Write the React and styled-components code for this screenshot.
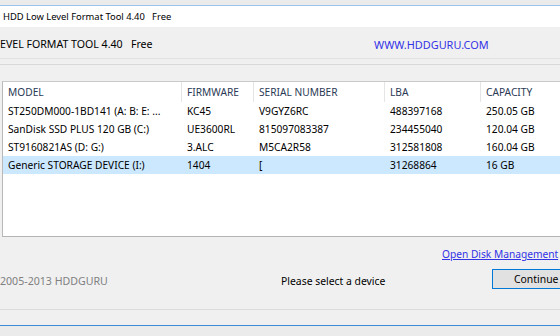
import React from "react"
import styled, { createGlobalStyle } from "styled-components"

const GlobalStyle = createGlobalStyle`
  html, body {
    margin: 0;
    padding: 0;
    background: #ececec;
    font-family: "Noto Sans", "Open Sans", sans-serif;
    font-size: 10.2px;
    color: #000;
  }
`

const columns = "179px 72px 131px 96px 1fr"

const drives = [
  { model: "ST250DM000-1BD141 (A: B: E: ...", fw: "KC45", serial: "V9GYZ6RC", lba: "488397168", cap: "250.05 GB" },
  { model: "SanDisk SSD PLUS 120 GB (C:)", fw: "UE3600RL", serial: "815097083387", lba: "234455040", cap: "120.04 GB" },
  { model: "ST9160821AS (D: G:)", fw: "3.ALC", serial: "M5CA2R58", lba: "312581808", cap: "160.04 GB" },
  { model: "Generic STORAGE DEVICE (I:)", fw: "1404", serial: "[", lba: "31268864", cap: "16 GB", selected: true },
]

const App = () => {
  return (
    <>
      <GlobalStyle />
      <Screen>
        <Window>
          <TitleBar>HDD Low Level Format Tool 4.40&nbsp;&nbsp;&nbsp;Free</TitleBar>
          <Body>
            <Banner>
              <BannerTitle>EVEL FORMAT TOOL 4.40&nbsp;&nbsp;&nbsp;Free</BannerTitle>
              <SiteLink>WWW.HDDGURU.COM</SiteLink>
            </Banner>
            <TabEdge />
            <ListView>
              <HeaderRow>
                <HeadCell>MODEL</HeadCell>
                <HeadCell>FIRMWARE</HeadCell>
                <HeadCell>SERIAL NUMBER</HeadCell>
                <HeadCell>LBA</HeadCell>
                <HeadCell $last>CAPACITY</HeadCell>
              </HeaderRow>
              {drives.map((d) => (
                <Row key={d.model} $selected={d.selected}>
                  <Cell>{d.model}</Cell>
                  <Cell>{d.fw}</Cell>
                  <Cell>{d.serial}</Cell>
                  <Cell>{d.lba}</Cell>
                  <Cell>{d.cap}</Cell>
                </Row>
              ))}
            </ListView>
            <Footer>
              <LinkRow>
                <DiskLink>Open Disk Management</DiskLink>
              </LinkRow>
              <StatusRow>
                <Copyright>2005-2013 HDDGURU</Copyright>
                <Status>Please select a device</Status>
                <Button>Continue</Button>
              </StatusRow>
            </Footer>
            <StatusStrip />
          </Body>
        </Window>
      </Screen>
    </>
  )
}

export default App

const Screen = styled.div`
  width: 560px;
  height: 336px;
  overflow: hidden;
  padding-top: 5px;
  box-sizing: border-box;
  background: #ebebeb;
`

const Window = styled.div`
  border-top: 1px solid #9cc4ea;
  background: #f0f0f0;
`

const TitleBar = styled.div`
  height: 21px;
  background: #fff;
  padding-left: 3px;
  line-height: 21px;
  font-size: 9.4px;
  white-space: nowrap;
`

const Body = styled.div`
  display: flex;
  flex-direction: column;
`

const Banner = styled.div`
  height: 28px;
  padding-top: 3px;
  display: flex;
  align-items: center;
  white-space: nowrap;
`

const BannerTitle = styled.div`
  width: 374px;
  flex-shrink: 0;
  font-size: 10.6px;
`

const SiteLink = styled.div`
  color: #3333e6;
  font-size: 10.9px;
`

const TabEdge = styled.div`
  height: 5px;
  border-top: 1px solid #e2e2e2;
  border-bottom: 1px solid #d9d9d9;
  margin-bottom: 16px;
`

const ListView = styled.div`
  margin-left: 2px;
  height: 154px;
  background: #fff;
  border-left: 1px solid #b9b9b9;
  border-top: 1px solid #c9c9c9;
  border-bottom: 1px solid #b4b4b4;
`

const HeaderRow = styled.div`
  display: grid;
  grid-template-columns: ${columns};
  height: 20px;
`

const HeadCell = styled.div`
  padding-left: 5px;
  line-height: 20px;
  color: #2b3a55;
  border-right: ${(p) => (p.$last ? "none" : "1px solid #e5e5e5")};
  white-space: nowrap;
`

const Row = styled.div`
  display: grid;
  grid-template-columns: ${columns};
  height: 18px;
  background: ${(p) => (p.$selected ? "#cce8ff" : "transparent")};
`

const Cell = styled.div`
  padding-left: 5px;
  line-height: 18px;
  white-space: nowrap;
  overflow: hidden;
`

const Footer = styled.div`
  height: 72px;
  display: flex;
  flex-direction: column;
  border-bottom: 1px solid #dcdcdc;
`

const LinkRow = styled.div`
  height: 16px;
  line-height: 16px;
  padding-top: 9px;
  padding-left: 442px;
`

const DiskLink = styled.span`
  color: #3333e6;
  text-decoration: underline;
  font-size: 10.2px;
  white-space: nowrap;
`

const StatusRow = styled.div`
  display: flex;
  align-items: center;
  margin-top: 7px;
  height: 20px;
  white-space: nowrap;
  font-size: 10.4px;
`

const Copyright = styled.div`
  width: 281px;
  flex-shrink: 0;
  padding-top: 4px;
  color: #808080;
  font-size: 10.6px;
`

const Status = styled.div`
  width: 211px;
  flex-shrink: 0;
  padding-top: 4px;
`

const Button = styled.div`
  flex-shrink: 0;
  width: 75px;
  height: 18px;
  border: 1px solid #0078d7;
  background: #e1e1e1;
  padding-left: 21px;
  line-height: 18px;
`

const StatusStrip = styled.div`
  height: 15px;
  border-bottom: 1px solid #3d8bd6;
`
